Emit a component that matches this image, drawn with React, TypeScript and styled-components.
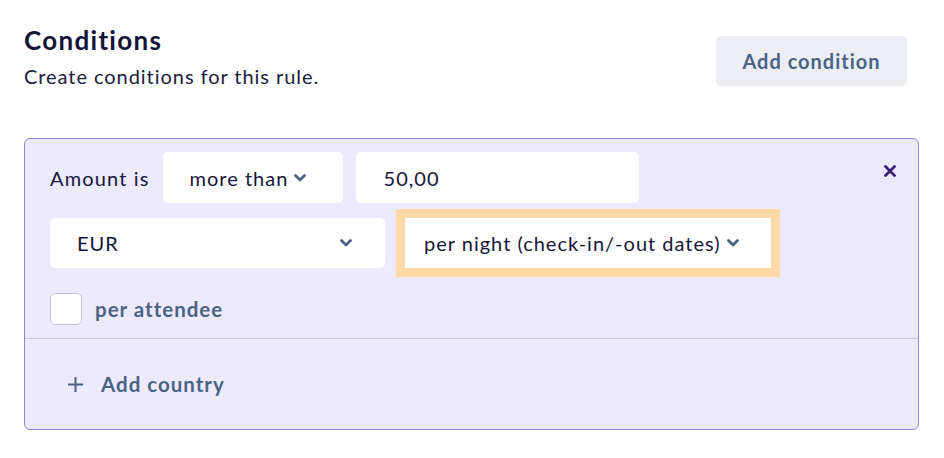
import React from "react";
import styled, { createGlobalStyle } from "styled-components";

const Global = createGlobalStyle`
  html, body { margin: 0; padding: 0; background: #ffffff; }
  body { font-family: Lato, "Noto Sans", sans-serif; color: #16163a; }
  * { box-sizing: border-box; }
`;

const Page = styled.div`
  width: 944px;
  height: 458px;
  padding: 0 25px 0 24px;
`;

const Header = styled.header`
  display: flex;
  justify-content: space-between;
  align-items: flex-start;
  padding-top: 24px;
  padding-right: 12px;
`;

const TitleBlock = styled.div`
  display: flex;
  flex-direction: column;
`;

const Title = styled.h2`
  margin: 0;
  font-size: 26px;
  line-height: 32px;
  font-weight: 700;
  letter-spacing: 1.3px;
  color: #131336;
`;

const Subtitle = styled.p`
  margin: 8px 0 0;
  font-size: 20px;
  line-height: 24px;
  letter-spacing: 0.95px;
  color: #1b1b3c;
`;

const SecondaryButton = styled.button`
  margin-top: 12px;
  width: 191px;
  height: 50px;
  border: none;
  border-radius: 5px;
  background: #edeef3;
  color: #4a6385;
  font-family: inherit;
  font-size: 20px;
  font-weight: 700;
  letter-spacing: 1px;
  cursor: pointer;
`;

const Card = styled.section`
  margin-top: 50px;
  border: 1px solid #8b87da;
  border-radius: 6px;
  background: #edeafd;
`;

const CardBody = styled.div`
  position: relative;
  padding: 13px 25px 13px 25px;
  display: flex;
  flex-direction: column;
`;

const Row = styled.div<{ $gap?: number; $mt?: number }>`
  display: flex;
  align-items: center;
  gap: ${(p) => p.$gap ?? 13}px;
  margin-top: ${(p) => p.$mt ?? 0}px;
`;

const Label = styled.span`
  font-size: 20px;
  letter-spacing: 1.15px;
  color: #16163a;
`;

const Select = styled.div<{ $w: number; $h?: number; $pl?: number; $focus?: boolean; $spread?: boolean }>`
  width: ${(p) => p.$w}px;
  height: ${(p) => p.$h ?? 50}px;
  background: #ffffff;
  border-radius: ${(p) => (p.$focus ? 0 : 5)}px;
  display: flex;
  align-items: center;
  justify-content: ${(p) => (p.$spread ? "space-between" : "flex-start")};
  gap: 6px;
  padding: 0 ${(p) => (p.$spread ? 33 : 0)}px 0 ${(p) => p.$pl ?? 27}px;
  font-size: 20px;
  letter-spacing: 1px;
  color: #16163a;
  box-shadow: ${(p) => (p.$focus ? "0 0 0 9px #fed8a6" : "none")};
`;

const Input = styled.div<{ $w: number }>`
  width: ${(p) => p.$w}px;
  height: 51px;
  background: #ffffff;
  border-radius: 5px;
  display: flex;
  align-items: center;
  padding-left: 28px;
  font-size: 20px;
  letter-spacing: 1px;
  color: #16163a;
`;

const Close = styled.button`
  position: absolute;
  top: 26px;
  right: 22px;
  width: 12px;
  height: 12px;
  padding: 0;
  border: none;
  background: transparent;
  display: flex;
  align-items: center;
  justify-content: center;
  cursor: pointer;
`;

const CheckRow = styled.label`
  display: flex;
  align-items: center;
  gap: 13px;
  margin-top: 25px;
`;

const Checkbox = styled.span`
  width: 32px;
  height: 32px;
  border: 1px solid #bcc6da;
  border-radius: 5px;
  background: #ffffff;
`;

const MutedText = styled.span`
  font-size: 20.5px;
  font-weight: 700;
  letter-spacing: 1px;
  color: #4a6385;
`;

const Divider = styled.hr`
  margin: 0;
  border: none;
  border-top: 1px solid #cdc6f3;
`;

const Footer = styled.div`
  height: 90px;
  display: flex;
  align-items: center;
  padding-left: 43px;
  gap: 18px;
`;

const Chevron = () => (
  <svg width="12" height="8" viewBox="0 0 12 8" aria-hidden>
    <path d="M1.5 1.5 L6 6 L10.5 1.5" fill="none" stroke="#4a6385" strokeWidth="2.8" strokeLinecap="round" strokeLinejoin="round" />
  </svg>
);

const Plus = () => (
  <svg width="15" height="15" viewBox="0 0 15 15" aria-hidden>
    <path d="M7.5 0 V15 M0 7.5 H15" stroke="#4a6385" strokeWidth="2" />
  </svg>
);

const XIcon = () => (
  <svg width="12" height="12" viewBox="0 0 12 12" aria-hidden>
    <path d="M1.5 1.5 L10.5 10.5 M10.5 1.5 L1.5 10.5" stroke="#3a1f78" strokeWidth="2.8" strokeLinecap="round" />
  </svg>
);

export default function App() {
  return (
    <>
      <Global />
      <Page>
        <Header>
          <TitleBlock>
            <Title>Conditions</Title>
            <Subtitle>Create conditions for this rule.</Subtitle>
          </TitleBlock>
          <SecondaryButton>Add condition</SecondaryButton>
        </Header>
        <Card>
          <CardBody>
            <Row>
              <Label>Amount is</Label>
              <Select $w={180} $h={51}>
                more than <Chevron />
              </Select>
              <Input $w={283}>50,00</Input>
            </Row>
            <Row $gap={20} $mt={15}>
              <Select $w={335} $spread>
                EUR <Chevron />
              </Select>
              <Select $w={366} $pl={19} $focus>
                per night (check-in/-out dates) <Chevron />
              </Select>
            </Row>
            <CheckRow>
              <Checkbox />
              <MutedText>per attendee</MutedText>
            </CheckRow>
            <Close aria-label="Remove condition">
              <XIcon />
            </Close>
          </CardBody>
          <Divider />
          <Footer>
            <Plus />
            <MutedText>Add country</MutedText>
          </Footer>
        </Card>
      </Page>
    </>
  );
}
